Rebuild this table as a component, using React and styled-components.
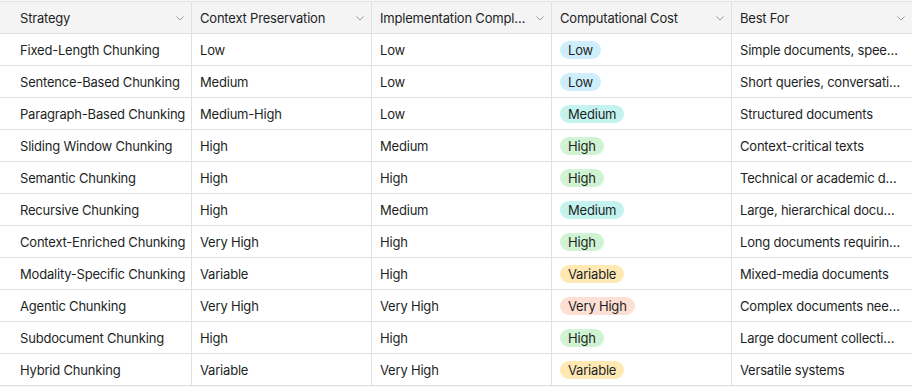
import React from 'react'
import styled, { createGlobalStyle } from 'styled-components'

const GlobalStyle = createGlobalStyle`
  body {
    margin: 0;
    background: #f7f7f8;
    font-family: Inter, "Noto Sans", "Liberation Sans", sans-serif;
    -webkit-font-smoothing: antialiased;
  }
`

const columns = [
  'Strategy',
  'Context Preservation',
  'Implementation Complexity',
  'Computational Cost',
  'Best For',
]

const rows = [
  ['Fixed-Length Chunking', 'Low', 'Low', 'Low', 'Simple documents, speed-critical tasks'],
  ['Sentence-Based Chunking', 'Medium', 'Low', 'Low', 'Short queries, conversational data'],
  ['Paragraph-Based Chunking', 'Medium-High', 'Low', 'Medium', 'Structured documents'],
  ['Sliding Window Chunking', 'High', 'Medium', 'High', 'Context-critical texts'],
  ['Semantic Chunking', 'High', 'High', 'High', 'Technical or academic documents'],
  ['Recursive Chunking', 'High', 'Medium', 'Medium', 'Large, hierarchical documents'],
  ['Context-Enriched Chunking', 'Very High', 'High', 'High', 'Long documents requiring context'],
  ['Modality-Specific Chunking', 'Variable', 'High', 'Variable', 'Mixed-media documents'],
  ['Agentic Chunking', 'Very High', 'Very High', 'Very High', 'Complex documents needing reasoning'],
  ['Subdocument Chunking', 'High', 'High', 'High', 'Large document collections'],
  ['Hybrid Chunking', 'Variable', 'Very High', 'Variable', 'Versatile systems'],
]

const pillColors = {
  Low: '#cfeefc',
  Medium: '#c4f3ef',
  High: '#d0f4d3',
  Variable: '#ffe9b3',
  'Very High': '#fde0d3',
}

const Table = styled.div`
  width: 912px;
  margin-top: 1px;
  background: #fff;
  border-top: 1px solid #e4e4e7;
`

const Row = styled.div`
  display: grid;
  grid-template-columns: 192px 180px 180px 180px 180px;
  height: 32px;
  border-bottom: 1px solid #dfe0e4;
  background: ${p => (p.head ? '#f4f4f5' : '#fff')};
  box-sizing: border-box;
`

const Cell = styled.div`
  display: flex;
  align-items: center;
  gap: 6px;
  min-width: 0;
  padding: 0 ${p => (p.head ? '2px' : p.first ? '2px' : '10px')} 0 ${p => (p.first ? '20px' : '8px')};
  border-right: ${p => (p.last ? 'none' : '1px solid #dfe0e4')};
  font-size: 13px;
  letter-spacing: -0.2px;
  color: #1d1f25;
`

const Text = styled.span`
  flex: 1;
  min-width: 0;
  white-space: nowrap;
  overflow: hidden;
  text-overflow: ellipsis;
`

const Chevron = styled.svg`
  flex: none;
  width: 10px;
  height: 10px;
  margin-right: 4px;
`

const Pill = styled.span`
  display: inline-flex;
  align-items: center;
  height: 18px;
  padding: 0 8px;
  border-radius: 9px;
  background: ${p => p.color};
  white-space: nowrap;
`

const ChevronDown = () => (
  <Chevron viewBox="0 0 10 10">
    <polyline points="1.5,3.5 5,7 8.5,3.5" fill="none" stroke="#9a9ba0" strokeWidth="1" />
  </Chevron>
)

export default function App() {
  return (
    <>
      <GlobalStyle />
      <Table>
        <Row head>
          {columns.map((c, i) => (
            <Cell key={c} head first={i === 0} last={i === columns.length - 1}>
              <Text>{c}</Text>
              <ChevronDown />
            </Cell>
          ))}
        </Row>
        {rows.map(r => (
          <Row key={r[0]}>
            {r.map((v, i) => (
              <Cell key={i} first={i === 0} last={i === r.length - 1}>
                {i === 3 ? <Pill color={pillColors[v]}>{v}</Pill> : <Text>{v}</Text>}
              </Cell>
            ))}
          </Row>
        ))}
      </Table>
    </>
  )
}
